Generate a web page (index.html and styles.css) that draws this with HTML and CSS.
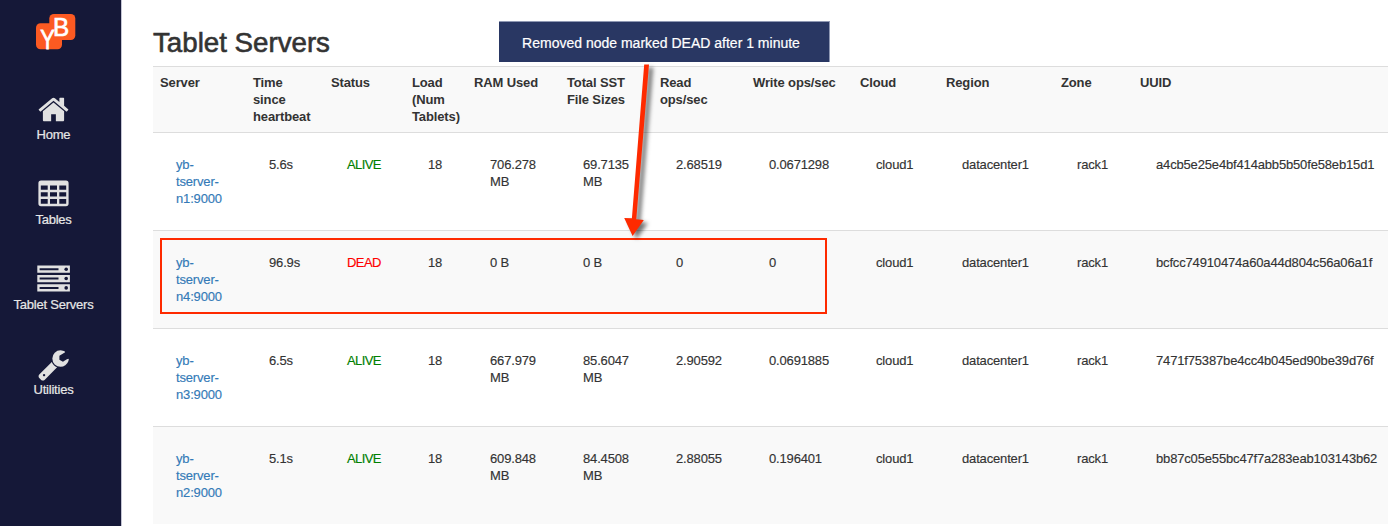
FILE: index.html
```html
<!DOCTYPE html>
<html lang="en">
<head>
<meta charset="utf-8">
<title>Tablet Servers</title>
<link rel="stylesheet" href="styles.css">
</head>
<body>
<div class="app">
  <nav class="sidebar">
    <svg class="logo" viewBox="0 0 40 36">
      <rect x="13.3" y="0" width="26" height="26" rx="4.5"/>
      <rect x="0" y="9.3" width="26" height="26" rx="4.5"/>
      <text class="logo-b" transform="translate(17.1 21.7) scale(.97 1)">B</text>
      <text class="logo-y" transform="translate(4.3 35) scale(.78 1)">Y</text>
    </svg>
    <a class="item"><svg class="icon" viewBox="0 0 1792 1792"><path d="M1472 992v480q0 26-19 45t-45 19h-384v-384h-256v384h-384q-26 0-45-19t-19-45v-480q0-1 .5-3t.5-3l575-474 575 474q1 2 1 6zm223-69l-62 74q-8 9-21 11h-3q-13 0-21-7l-692-577-692 577q-12 8-24 7-13-2-21-11l-62-74q-8-10-7-23.5t11-21.5l719-599q32-26 76-26t76 26l244 204v-195q0-14 9-23t23-9h192q14 0 23 9t9 23v408l219 182q10 8 11 21.5t-7 23.5z"/></svg><span>Home</span></a>
    <a class="item"><svg class="icon" viewBox="0 0 33 33"><path fill-rule="evenodd" d="M4 2.6H29a2.6 2.6 0 0 1 2.6 2.6V25.600a2.600 2.600 0 0 1-2.600 2.600H4a2.600 2.600 0 0 1-2.600-2.600V5.200A2.600 2.600 0 0 1 4 2.600zM3.800 7.500v4.300h6.900V7.500zm9.200 0v4.300h7V7.500zm9.300 0v4.300h6.900V7.500zM3.800 14.200v4.400h6.900v-4.400zm9.200 0v4.400h7v-4.400zm9.300 0v4.400h6.900v-4.400zM3.800 21v4.700h6.900V21zm9.200 0v4.700h7V21zm9.300 0v4.700h6.900V21z"/></svg><span>Tables</span></a>
    <a class="item"><svg class="icon" viewBox="0 0 33 33">
      <path d="M.3 2.500h32.600v7.300H.3zM.3 11.900h32.600v7.300H.3zM.3 21.200h32.600v7.300H.3z"/>
      <path class="cut" d="M2.600 5.200h18.900v2H2.600zM2.600 14.600h18.900v2H2.600zM2.600 23.900h18.900v2H2.600z"/>
      <g class="cut"><circle cx="29.200" cy="6.200" r="1.800"/><circle cx="29.200" cy="15.500" r="1.800"/><circle cx="29.200" cy="24.900" r="1.800"/></g>
    </svg><span>Tablet Servers</span></a>
    <a class="item"><svg class="icon" viewBox="0 0 1792 1792"><path d="M448 1472q0-26-19-45t-45-19-45 19-19 45 19 45 45 19 45-19 19-45zm644-420l-682 682q-37 37-90 37-52 0-91-37l-106-108q-38-36-38-90 0-53 38-91l681-681q39 98 114.5 173.5t173.500 114.500zm634-435q0 39-23 106-47 134-164.500 217.500t-258.500 83.500q-185 0-316.500-131.500t-131.500-316.500 131.500-316.500 316.500-131.500q58 0 121.500 16.500t107.500 46.500q16 11 16 28t-16 28l-293 169v224l193 107q5-3 79-48.500t135.500-81 70.500-35.500q15 0 23.500 10t8.500 25z"/></svg><span>Utilities</span></a>
  </nav>
  <main class="content">
    <h2 class="title">Tablet Servers</h2>
    <table class="servers">
      <colgroup><col class="w93"><col class="w78"><col class="w81"><col class="w62"><col class="w93"><col class="w93"><col class="w93"><col class="w107"><col class="w86"><col class="w115"><col class="w79"><col></colgroup>
      <tr><th>Server</th><th>Time<br>since<br>heartbeat</th><th>Status</th><th>Load<br>(Num<br>Tablets)</th><th>RAM Used</th><th>Total SST<br>File Sizes</th><th>Read<br>ops/sec</th><th>Write ops/sec</th><th>Cloud</th><th>Region</th><th>Zone</th><th>UUID</th></tr>
      <tr><td><a>yb-<br>tserver-<br>n1:9000</a></td><td>5.6s</td><td class="alive">ALIVE</td><td>18</td><td>706.278<br>MB</td><td>69.7135<br>MB</td><td>2.68519</td><td>0.0671298</td><td>cloud1</td><td>datacenter1</td><td>rack1</td><td>a4cb5e25e4bf414abb5b50fe58eb15d1</td></tr>
      <tr><td><a>yb-<br>tserver-<br>n4:9000</a></td><td>96.9s</td><td class="dead">DEAD</td><td>18</td><td>0 B</td><td>0 B</td><td>0</td><td>0</td><td>cloud1</td><td>datacenter1</td><td>rack1</td><td>bcfcc74910474a60a44d804c56a06a1f</td></tr>
      <tr><td><a>yb-<br>tserver-<br>n3:9000</a></td><td>6.5s</td><td class="alive">ALIVE</td><td>18</td><td>667.979<br>MB</td><td>85.6047<br>MB</td><td>2.90592</td><td>0.0691885</td><td>cloud1</td><td>datacenter1</td><td>rack1</td><td>7471f75387be4cc4b045ed90be39d76f</td></tr>
      <tr><td><a>yb-<br>tserver-<br>n2:9000</a></td><td>5.1s</td><td class="alive">ALIVE</td><td>18</td><td>609.848<br>MB</td><td>84.4508<br>MB</td><td>2.88055</td><td>0.196401</td><td>cloud1</td><td>datacenter1</td><td>rack1</td><td>bb87c05e55bc47f7a283eab103143b62</td></tr>
    </table>
  </main>
  <div class="callout">Removed node marked DEAD after 1 minute</div>
  <div class="highlight"></div>
  <svg class="arrow" viewBox="0 0 60 190"><path d="M34.200 4.500h4.800L26.300 159.200l7.500.9L22.600 176 14.200 158l7.700.3z"/></svg>
</div>
</body>
</html>
```
FILE: styles.css
```css
* { box-sizing: border-box; }
body {
  margin: 0;
  background: #fff;
  color: #333;
  font: 13px/17px "Liberation Sans", Arial, sans-serif;
}
.app {
  position: relative;
  display: flex;
  width: 1388px;
  height: 526px;
  overflow: hidden;
}
.sidebar {
  flex: none;
  display: flex;
  flex-direction: column;
  align-items: center;
  width: 122px;
  padding-top: 14px;
  background: #151838;
  border-right: 1px solid #c4c5d4;
}
.logo {
  flex: none;
  width: 40px;
  height: 36px;
  margin: 0 10px 43px 0;
  fill: #fc5a22;
  overflow: visible;
}
.logo text { fill: #fff; font-family: "Liberation Sans", Arial, sans-serif; line-height: 1; }
.logo .logo-b { font-size: 25px; stroke: #fff; stroke-width: .7px; }
.logo .logo-y { font-size: 28px; stroke: #fff; stroke-width: .8px; }
.item {
  display: flex;
  flex-direction: column;
  align-items: center;
  height: 85px;
  margin-right: 14px;
  color: #e7e7e7;
  letter-spacing: -.23px;
  white-space: nowrap;
  -webkit-text-stroke: .2px #e7e7e7;
}
.icon { width: 33px; height: 33px; fill: #e1e1e1; }
.cut { fill: #151838; }
.content { flex: 1; min-width: 0; padding: 27px 0 0 31px; }
.title {
  margin: 0 0 8px;
  font-size: 27.700px;
  font-weight: 400;
  line-height: 31px;
  -webkit-text-stroke: .6px #333;
}
.servers {
  width: 1240px;
  table-layout: fixed;
  border-collapse: separate;
  border-spacing: 0;
}
.w93 { width: 93px; }
.w78 { width: 78px; }
.w81 { width: 81px; }
.w62 { width: 62px; }
.w107 { width: 107px; }
.w86 { width: 86px; }
.w115 { width: 115px; }
.w79 { width: 79px; }
th, td {
  border-top: 1px solid #ddd;
  text-align: left;
  vertical-align: top;
  white-space: nowrap;
}
th { padding: 7px; font-weight: 700; letter-spacing: -.13px; }
td { padding: 23px; letter-spacing: -.16px; -webkit-text-stroke: .15px currentColor; }
tr:nth-child(odd) { background: #f9f9f9; }
td a { color: #337ab7; }
.alive { color: #008000; letter-spacing: -.6px; }
.dead { color: #f00; letter-spacing: -.55px; }
.callout {
  position: absolute;
  left: 499px;
  top: 21px;
  width: 331px;
  height: 41px;
  padding-right: 6px;
  border: 1px solid #8f98b3;
  border-width: 1px 1px 0 0;
  background: #293763;
  color: #fff;
  font-size: 14px;
  line-height: 42px;
  text-align: center;
  -webkit-text-stroke: .2px #fff;
}
.highlight {
  position: absolute;
  left: 160px;
  top: 238px;
  width: 667px;
  height: 76px;
  border: 2px solid #fe2a00;
}
.arrow {
  position: absolute;
  left: 610px;
  top: 60px;
  width: 60px;
  height: 190px;
  fill: #fe2a00;
  filter: drop-shadow(4px 3px 2px rgba(0, 0, 0, .55));
}
```
